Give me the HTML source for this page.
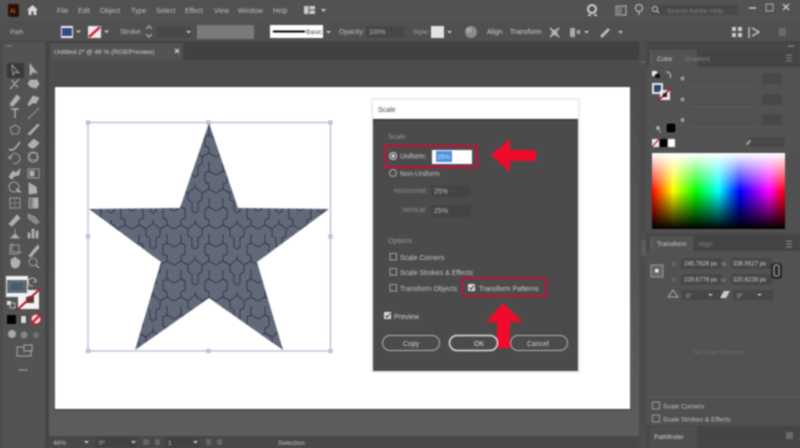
<!DOCTYPE html>
<html><head><meta charset="utf-8"><title>Scale</title>
<style>
html,body{margin:0;padding:0;background:#535353;width:800px;height:448px;overflow:hidden}
#w{position:relative;width:800px;height:448px;overflow:hidden;filter:blur(.7px)}
#w>svg{position:absolute;left:0;top:0}
text{font-family:"Liberation Sans",sans-serif;font-size:7px;fill:#bdbdbd}
#sp{position:absolute;left:652px;top:153px;width:133px;height:76px;background:linear-gradient(180deg,#fff 0,rgba(255,255,255,0) 50%,rgba(0,0,0,0) 50%,#000 100%),linear-gradient(90deg,#f00 0,#ff0 16%,#0f0 33%,#0ff 50%,#00f 66%,#f0f 88%,#f00 100%)}
</style></head><body><div id="w">
<svg width="800" height="448" viewBox="0 0 800 448">
<defs>
<pattern id="fine" width="2.600" height="2.600" patternUnits="userSpaceOnUse" patternTransform="rotate(30)">
<rect width="2.600" height="2.600" fill="#555c6c"/><rect width="2.600" height=".9" fill="#7a808e"/>
</pattern>
<pattern id="hex" width="42" height="36" patternUnits="userSpaceOnUse" x="6" y="4">
<rect width="42" height="36" fill="url(#fine)"/>
<g fill="none" stroke="#252b44" stroke-width=".75">
<path d="M0 9 L7 5 L14 9 L14 16 L18 18 L18 27 L21 29 L24 27 L24 18 L28 16 L28 9 L35 5 L42 9"/>
<path d="M0 27 L7 23 L11 25 L11 34 L7 36 M7 0 L7 5 M35 0 L35 5 M35 23 L42 27 M35 23 L31 25 L31 34 L35 36"/>
<path d="M21 0 L21 3 L14 9 M21 3 L28 9 M7 23 L7 14 M35 23 L35 14"/>
</g>
</pattern>
<linearGradient id="bg" x1="0" y1="0" x2="0" y2="1"><stop offset="0" stop-color="#4c4c4c"/><stop offset="1" stop-color="#5c5c5c"/></linearGradient>
</defs>

<!-- base chrome -->
<rect width="800" height="448" fill="#535353"/>
<rect y="0" width="800" height="21" fill="#525252"/>
<rect y="21" width="800" height="21" fill="#505050"/>
<rect y="41" width="800" height="1" fill="#444"/>
<rect x="48" y="42" width="591" height="18" fill="#414141"/>
<rect x="0" y="42" width="47" height="8" fill="#474747"/>
<rect x="50" y="43" width="133" height="17" fill="#535353"/>
<rect x="0" y="42" width="47" height="406" fill="#535353"/>
<rect x="0" y="42" width="3" height="406" fill="#4b4b4b"/>
<rect x="45" y="42" width="4" height="406" fill="#464646"/>
<rect x="49" y="60" width="590" height="376" fill="url(#bg)"/>
<rect x="49" y="436" width="590" height="12" fill="#484848"/>

<!-- artboard -->
<rect x="55" y="87" width="575" height="322" fill="#fff"/>
<rect x="54" y="86" width="577" height="1" fill="#3e3e3e"/>
<rect x="54" y="409" width="577" height="1" fill="#3a3a3a"/>

<!-- title bar -->
<rect x="8" y="4" width="11" height="13" rx="2" fill="#2a1208"/>
<text x="10" y="13" style="font-size:6px;fill:#e8862a">Ai</text>
<path d="M27 10l5.500-5 5.500 5h-1.500v5h-3v-3.500h-2V15h-3v-5z" fill="#d8d8d8"/>
<g style="font-size:7px">
<text x="57" y="13">File</text><text x="78" y="13">Edit</text><text x="100" y="13">Object</text>
<text x="131" y="13">Type</text><text x="156" y="13">Select</text><text x="185" y="13">Effect</text>
<text x="214" y="13">View</text><text x="238" y="13">Window</text><text x="273" y="13">Help</text>
</g>
<rect x="304" y="6" width="11" height="8" fill="#ccc"/><path d="M309 6v8M309 10h6" stroke="#555" fill="none"/>
<path d="M321 9l2.500 3 2.500-3z" fill="#ccc"/>
<circle cx="592" cy="9" r="4" fill="none" stroke="#ddd" stroke-width="1.800"/><path d="M588 15h3M594 15h3" stroke="#ddd" stroke-width="1.500"/>
<rect x="616" y="6" width="10" height="9" fill="none" stroke="#bbb"/><rect x="616" y="6" width="6" height="9" fill="#777"/>
<circle cx="639" cy="8" r="3.500" fill="none" stroke="#ccc"/><path d="M639 12v3" stroke="#ccc"/>
<rect x="652" y="5" width="86" height="10" rx="1" fill="#484848"/>
<circle cx="655" cy="9" r="2.500" fill="none" stroke="#ccc"/><path d="M657 11l2 2" stroke="#ccc"/>
<text x="667" y="13" style="font-size:6.500px;fill:#7e7e7e">Search Adobe Help</text>
<path d="M749 8h7" stroke="#ccc" stroke-width="1.500"/>
<rect x="766" y="4" width="7" height="7" fill="none" stroke="#aaa"/>
<path d="M783 4l6 6M789 4l-6 6" stroke="#ddd" stroke-width="1.200"/>

<!-- control bar -->
<text x="10" y="34" style="font-size:6.500px">Path</text>
<rect x="61" y="26" width="12" height="12" fill="#eef" /><rect x="62" y="28" width="10" height="8" fill="#2c4e7e"/>
<path d="M76 30.500l2.500 2.500 2.500-2.500z" fill="#ccc"/>
<rect x="88" y="26" width="13" height="12" fill="#f3e6e6"/><path d="M89 37l11-10" stroke="#c8203c" stroke-width="2.500"/>
<path d="M104 30.500l2.500 2.500 2.500-2.500z" fill="#ccc"/>
<text x="120" y="34" style="font-size:7px">Stroke:</text>
<path d="M146 29l3-3 3 3M146 34l3 3 3-3" stroke="#bbb" fill="none"/>
<rect x="157" y="27" width="34" height="11" fill="#484848"/>
<path d="M186 31l2.500 2.500 2.500-2.500z" fill="#ccc"/>
<rect x="197" y="25" width="57" height="14" fill="#7a7a7a"/>
<rect x="270" y="25" width="53" height="13" fill="#fff"/>
<rect x="273" y="30.500" width="32" height="2" fill="#000"/>
<text x="306" y="34" style="font-size:6.500px;fill:#444">Basic</text>
<path d="M326 31l2.500 2.500 2.500-2.500z" fill="#ccc"/>
<text x="339" y="34">Opacity:</text>
<rect x="366" y="26" width="33" height="12" fill="#474747"/>
<text x="369" y="34" style="font-size:6.500px">100%</text>
<rect x="399" y="26" width="5" height="12" fill="#474747"/>
<text x="413" y="34" style="font-size:6.500px;fill:#a0a0a0">Style:</text>
<rect x="431" y="26" width="13" height="12" fill="#e4e4e4"/>
<path d="M447 31l2.500 2.500 2.500-2.500z" fill="#ccc"/>
<circle cx="471" cy="32" r="6" fill="#8b8b8b"/><circle cx="469" cy="30" r="3" fill="#a5a5a5"/>
<text x="487" y="34" style="fill:#d0d0d0">Align</text>
<text x="510" y="34" style="fill:#d0d0d0">Transform</text>
<path d="M550 28l9 9M559 28l-9 9" stroke="#ccc" stroke-width="1.500"/><rect x="552" y="30" width="5" height="5" fill="none" stroke="#aaa"/>
<path d="M570 28h5v9h-5zM577 30h3v4h-3z" fill="#aaa"/>
<path d="M584 31l2.500 2.500 2.500-2.500z" fill="#ccc"/>
<path d="M600 36l8-8 2 2-8 8z" fill="#bbb"/><path d="M618 31l2.500 2.500 2.500-2.500z" fill="#ccc"/>
<g fill="#ccc"><rect x="732" y="27" width="4" height="4"/><rect x="738" y="27" width="4" height="4"/><rect x="732" y="33" width="4" height="4"/><rect x="738" y="33" width="4" height="4"/></g>
<path d="M749 27v11M752 28l7 4-7 4" stroke="#ccc" fill="none" stroke-width="1.300"/>
<rect x="779" y="28" width="7" height="8" fill="#6c6c6c"/>

<!-- tab -->
<text x="54" y="54" style="font-size:6.500px;fill:#cfcfcf">Untitled-2* @ 46 % (RGB/Preview)</text>
<path d="M175 49l4 4M179 49l-4 4" stroke="#ddd" stroke-width="1.200"/>
<path d="M6 46h6" stroke="#888"/>

<!-- tool bar -->
<rect x="7" y="63" width="17" height="15" fill="#3a3a3a"/>
<g fill="#b0b0b0" stroke="#b0b0b0" stroke-width=".8">
<path d="M12 65l1 10 2-3 4 1z" fill="none"/><path d="M30 64l0 11 3-3 4 1z"/>
<path d="M10 89l9-10M12 80l2 3M18 87l-3-2" fill="none" stroke-width="1.200"/><path d="M30 80h7l2 4-3 4-5-1-3-3z"/>
<path d="M10 104l7-9 3 3-7 8zM11 105l-1 2"/><path d="M28 104l5-8 6 2-3 5-4 0-3 3z"/>
<path d="M11 109h8M15 109v9" fill="none" stroke-width="1.400"/><path d="M28 119l11-11" fill="none"/>
<path d="M15 125l5 3-2 6h-6l-2-6z" fill="none"/><path d="M28 134l10-10 1 1-9 10z"/>
<path d="M9 149c3 3 6 0 11-7" fill="none" stroke-width="1.600"/><path d="M28 145l6-6 5 4-5 5h-3z"/>
<path d="M10 158a5 5 0 1 1 3 5M8 156l2 3 2-3" fill="none"/><circle cx="33" cy="157" r="5" fill="none"/><rect x="30" y="153" width="7" height="7" fill="none"/>
<path d="M9 177l4-6 3 2 4-4-1 6-5 1-2 3z"/><rect x="28" y="169" width="11" height="9" fill="none"/><rect x="30" y="171" width="4" height="5"/>
<circle cx="14" cy="187" r="5" fill="none"/><path d="M16 188l5 4-3 0z"/><path d="M29 183l7 4 1 6-8 1z"/>
<rect x="10" y="198" width="10" height="10" fill="none"/><path d="M15 198v10M10 203h10" stroke="#888"/><rect x="29" y="198" width="4" height="10" fill="#777"/><rect x="34" y="198" width="4" height="10"/>
<path d="M9 224l8-9 3 3-8 8z"/><path d="M28 214l7 3 4 5-3 2-8-6z" stroke="#999" fill="#888"/>
<path d="M15 229v8M11 238l4-4 4 4M10 238h10"/><path d="M28 238v-5h2v5zM32 238v-9h2v9zM36 238v-7h2v7z"/>
<path d="M10 245h9v9h-9zM12 243v9h10" fill="none"/><path d="M29 256l6-8 3-3 1 3-3 3-5 6z"/>
<path d="M11 262c0-5 2-2 3-4s2 0 3 1 3 0 3 3-2 6-5 6-4-2-4-6z"/><circle cx="33" cy="262" r="4" fill="none"/><path d="M36 265l3 3" fill="none" stroke-width="1.300"/>
</g>
<path d="M36 281a4 4 0 1 0-3 5M36 279v3h-3" fill="none" stroke="#bbb"/>
<!-- fill/stroke -->
<rect x="18" y="290" width="21" height="19" fill="#f6f0f0"/>
<rect x="26" y="296" width="8" height="7" fill="#5a3a3a"/>
<path d="M17 310l23-21" stroke="#a81c30" stroke-width="2"/>
<rect x="6" y="276" width="22" height="21" fill="#f2f2f2"/>
<rect x="7" y="280" width="20" height="13" fill="#5c6a78"/>
<rect x="11" y="283" width="12" height="7" fill="#4b5a68"/>
<rect x="7" y="301" width="4" height="4" fill="#eee"/><rect x="10" y="303" width="5" height="5" fill="none" stroke="#bbb"/>
<rect x="7" y="315" width="9" height="9" fill="#000"/>
<rect x="19" y="315" width="9" height="9" fill="#444"/><rect x="21" y="316" width="5" height="7" fill="#ddd"/>
<circle cx="36" cy="319" r="5" fill="#e8e8e8"/><path d="M32 323l8-8" stroke="#d01c30" stroke-width="2.500"/><circle cx="36" cy="319" r="5" fill="none" stroke="#c02030" stroke-width="1.300"/>
<circle cx="12" cy="334" r="4" fill="#aaa"/><circle cx="24" cy="335" r="3.500" fill="#858585"/><circle cx="36" cy="335" r="3" fill="#737373"/>
<rect x="17" y="347" width="14" height="9" fill="none" stroke="#aaa"/><rect x="24" y="345" width="8" height="6" fill="#535353" stroke="#aaa"/>
<path d="M19 370h9" stroke="#aaa" stroke-dasharray="2 1" stroke-width="1.500"/>

<!-- star -->
<g stroke="#a9a9cf" stroke-width="1" fill="none">
<rect x="88" y="122.500" width="242.500" height="228.500"/>
</g>
<g fill="#ddd" stroke="#a9a9cf">
<rect x="86.500" y="121" width="3" height="3"/><rect x="207" y="121" width="3" height="3"/><rect x="329" y="121" width="3" height="3"/>
<rect x="86.500" y="235" width="3" height="3"/><rect x="329" y="235" width="3" height="3"/>
<rect x="86.500" y="349.500" width="3" height="3"/><rect x="207" y="349.500" width="3" height="3"/><rect x="329" y="349.500" width="3" height="3"/>
</g>
<path d="M209 123L238 208L329 209L257 262L283 350L209 298L135 350L161 262L89 209L180 208Z" fill="url(#hex)"/>

<!-- dialog -->
<rect x="371" y="98" width="209" height="275" fill="#c8c8c8" opacity=".3"/>
<rect x="373" y="100" width="205" height="271" fill="#4b4b4b"/>
<rect x="373" y="100" width="205" height="20" fill="#fff"/>
<rect x="373" y="119" width="205" height="1.500" fill="#2f2f2f"/>
<text x="378" y="112" style="fill:#444;font-size:7px">Scale</text>
<text x="388" y="139" style="fill:#989898">Scale</text>
<rect x="385" y="146" width="92" height="21" fill="none" stroke="#b5183a" stroke-width="2.400"/>
<circle cx="393" cy="156" r="3.500" fill="#4d4d4d" stroke="#d8d8d8"/><circle cx="393" cy="156" r="1.700" fill="#ddd"/>
<text x="400" y="158.500" style="fill:#d0d0d0">Uniform:</text>
<rect x="432" y="150" width="40" height="14" fill="#fff"/>
<rect x="436" y="151" width="16" height="11" fill="#4a90dc"/>
<text x="437" y="159" style="font-size:6.500px;fill:#d9ecff">25%</text>
<circle cx="393" cy="173" r="3.500" fill="#4d4d4d" stroke="#aaa"/>
<text x="400" y="176" style="fill:#c4c4c4">Non-Uniform</text>
<text x="394" y="193" style="fill:#8e8e8e">Horizontal:</text>
<rect x="431" y="185" width="40" height="12" fill="#444"/>
<text x="434" y="193.500" style="fill:#bbb">25%</text>
<text x="402" y="212" style="fill:#8e8e8e">Vertical:</text>
<rect x="431" y="205" width="40" height="12" fill="#444"/>
<text x="434" y="213" style="fill:#bbb">25%</text>
<!-- red arrow left -->
<path d="M491 155L510 139L510 150L536 150L536 161L510 161L510 172Z" fill="#f00a2c"/>
<text x="388" y="243" style="fill:#989898">Options</text>
<g fill="none" stroke="#a0a0a0"><rect x="390" y="253.500" width="6.500" height="6.500"/><rect x="390" y="268.500" width="6.500" height="6.500"/><rect x="390" y="284.500" width="6.500" height="6.500"/></g>
<text x="400" y="260" style="fill:#c4c4c4">Scale Corners</text>
<text x="400" y="275" style="fill:#c4c4c4">Scale Strokes &amp; Effects</text>
<text x="400" y="291" style="fill:#c4c4c4">Transform Objects</text>
<rect x="463" y="278" width="83" height="18" fill="none" stroke="#b5183a" stroke-width="2.200"/>
<rect x="468" y="284" width="7" height="7" fill="#ddd"/><path d="M469.500 287.500l1.500 2 3-4" stroke="#444" fill="none" stroke-width="1.100"/>
<text x="479" y="291" style="fill:#d0d0d0">Transform Patterns</text>
<path d="M503 303L523 322L510 322L510 348L497 348L497 322L486 322Z" fill="#f00a2c"/>
<rect x="384" y="312" width="7" height="7" fill="#ddd"/><path d="M385.500 315.500l1.500 2 3-4" stroke="#444" fill="none" stroke-width="1.100"/>
<text x="394" y="319" style="fill:#d0d0d0">Preview</text>
<g fill="none">
<rect x="382.500" y="335.500" width="57" height="15" rx="7.500" stroke="#b5b5b5"/>
<rect x="449.500" y="335.500" width="48" height="15" rx="7.500" stroke="#e0e0e0" stroke-width="1.500"/>
<rect x="510.500" y="335.500" width="57" height="15" rx="7.500" stroke="#b5b5b5"/>
</g>
<text x="403" y="346" style="fill:#d0d0d0">Copy</text>
<text x="474" y="346" style="fill:#e4e4e4">OK</text>
<text x="527" y="346" style="fill:#d0d0d0">Cancel</text>

<!-- right dock -->
<rect x="639" y="42" width="8" height="406" fill="#4c4c4c"/>
<rect x="647" y="42" width="153" height="406" fill="#505050"/>
<rect x="647" y="42" width="153" height="8" fill="#474747"/>
<path d="M788 46h6" stroke="#999"/>
<rect x="647" y="50" width="153" height="17" fill="#444"/>
<rect x="649" y="50" width="48" height="17" fill="#535353"/>
<text x="657" y="61" style="fill:#d0d0d0;font-size:6.500px">Color</text>
<text x="685" y="61" style="fill:#808080;font-size:6.500px">Gradient</text>
<path d="M652 55v7" stroke="#777" stroke-dasharray="1 1"/>
<path d="M786 55h6M786 58h6M786 61h6" stroke="#888"/>
<rect x="647" y="67" width="153" height="86" fill="#525252"/>
<rect x="652" y="71" width="5" height="5" fill="#eee"/><rect x="655" y="74" width="5" height="4" fill="#111"/>
<path d="M666 72a4 4 0 0 1 4 6" fill="none" stroke="#bbb" stroke-width="1.200"/>
<rect x="652" y="83" width="11" height="11" fill="#e8e8f0"/><rect x="654" y="85" width="7" height="7" fill="#2c4866"/>
<rect x="660" y="90" width="10" height="10" fill="#f2e6e6"/><path d="M659 100l12-12" stroke="#b81c30" stroke-width="1.800"/><rect x="663" y="93" width="4" height="4" fill="#222"/>
<g fill="#9a9a9a"><circle cx="682.500" cy="78.500" r="2"/><circle cx="682.500" cy="99.500" r="2"/><circle cx="682.500" cy="120" r="2"/></g>
<g fill="#484848"><rect x="762" y="73" width="20" height="11"/><rect x="762" y="94" width="20" height="11"/><rect x="762" y="114" width="20" height="11"/><rect x="750" y="137" width="35" height="10"/></g>
<path d="M688 86h70M688 107h70M688 127h70" stroke="#5a5a5a"/>
<path d="M746 144l4-4 1 1-4 4z" fill="#bbb"/>
<circle cx="658" cy="128" r="2" fill="#aaa"/><path d="M659 130l2 3" stroke="#aaa"/>
<rect x="666" y="123" width="10" height="10" rx="2" fill="#000" stroke="#666"/>
<rect x="652" y="139" width="7" height="8" fill="#eee"/><path d="M652 147l7-8" stroke="#b81c30" stroke-width="1.300"/>
<rect x="660" y="139" width="7" height="8" fill="#000"/><rect x="668" y="139" width="7" height="8" fill="#fff"/>
<!-- transform tabs -->
<rect x="647" y="233" width="153" height="2" fill="#494949"/>
<rect x="647" y="235" width="153" height="16" fill="#444"/>
<rect x="649" y="236" width="44" height="15" fill="#535353"/>
<text x="657" y="246" style="fill:#d0d0d0;font-size:6.500px">Transform</text>
<text x="698" y="246" style="fill:#808080;font-size:6.500px">Align</text>
<path d="M652 240v7" stroke="#777" stroke-dasharray="1 1"/>
<path d="M786 241h6M786 244h6M786 247h6" stroke="#888"/>
<rect x="647" y="251" width="153" height="145" fill="#525252"/>
<rect x="651" y="265" width="12" height="12" fill="#666" stroke="#999"/><rect x="655" y="269" width="3.500" height="3.500" fill="#eee"/>
<rect x="681" y="258" width="41" height="11" rx="2" fill="#474747"/><text x="684" y="265.500" style="font-size:6px;fill:#ccc">245.7926 px</text>
<rect x="731" y="258" width="41" height="11" rx="2" fill="#474747"/><text x="733" y="265.500" style="font-size:6px;fill:#ccc">336.9527 px</text>
<rect x="681" y="274" width="41" height="11" rx="2" fill="#474747"/><text x="684" y="281.500" style="font-size:6px;fill:#ccc">229.6776 px</text>
<rect x="731" y="274" width="41" height="11" rx="2" fill="#474747"/><text x="733" y="281.500" style="font-size:6px;fill:#ccc">320.6228 px</text>
<text x="672" y="266" style="font-size:5.500px;fill:#999">X:</text><text x="672" y="282" style="font-size:5.500px;fill:#999">Y:</text><text x="721" y="266" style="font-size:5.500px;fill:#999">W:</text><text x="721" y="282" style="font-size:5.500px;fill:#999">H:</text>
<rect x="771" y="263" width="11" height="16" rx="3" fill="#2a2a2a"/><rect x="774" y="265" width="5" height="11" rx="2" fill="none" stroke="#bbb"/>
<path d="M668 297l5-7 5 7z" fill="none" stroke="#aaa"/>
<rect x="682" y="290" width="40" height="10" fill="#474747"/><text x="686" y="298" style="font-size:6px;fill:#bbb">0°</text><path d="M708 294l2.500 2 2.500-2z" fill="#ccc"/>
<path d="M720 298l4-7h6l-4 7z" fill="#ccc"/>
<rect x="733" y="290" width="40" height="10" fill="#474747"/><text x="737" y="298" style="font-size:6px;fill:#bbb">0°</text><path d="M757 294l2.500 2 2.500-2z" fill="#ccc"/>
<path d="M647 305h153" stroke="#585858"/>
<text x="694" y="354" style="font-size:5.500px;fill:#6e6e6e">No Shape Properties</text>
<path d="M647 397h153" stroke="#5c5c5c"/>
<g fill="none" stroke="#999"><rect x="652.500" y="402" width="7" height="7"/><rect x="652.500" y="415" width="7" height="7"/></g>
<text x="663" y="408.500" style="font-size:6.500px;fill:#c0c0c0">Scale Corners</text>
<text x="663" y="421.500" style="font-size:6.500px;fill:#c0c0c0">Scale Strokes &amp; Effects</text>
<rect x="647" y="426" width="153" height="22" fill="#454545"/>
<rect x="649" y="427" width="48" height="21" fill="#4e4e4e"/>
<text x="654" y="439" style="fill:#d0d0d0;font-size:6.500px">Pathfinder</text>
<rect x="786" y="432" width="7" height="7" fill="#6a6a6a"/>
<path d="M641 240h5v16h-5z" fill="#5c5c5c"/>
<path d="M641 62h4" stroke="#777"/>

<!-- status bar -->
<text x="53" y="445" style="font-size:6.500px;fill:#c0c0c0">46%</text>
<path d="M84 441l2.500 2.500 2.500-2.500z" fill="#ccc"/>
<rect x="96" y="437" width="40" height="11" fill="#414141"/>
<text x="99" y="445" style="font-size:6.500px;fill:#c0c0c0">0°</text>
<path d="M131 441l2.500 2.500 2.500-2.500z" fill="#ccc"/>
<rect x="143" y="439" width="6" height="6" fill="#666"/><rect x="155" y="439" width="5" height="6" fill="#666"/>
<rect x="165" y="437" width="34" height="11" fill="#414141"/>
<text x="168" y="445" style="font-size:6.500px;fill:#c0c0c0">1</text>
<path d="M193 441l2.500 2.500 2.500-2.500z" fill="#ccc"/>
<rect x="206" y="439" width="5" height="6" fill="#666"/><rect x="217" y="439" width="5" height="6" fill="#666"/>
<text x="278" y="445" style="font-size:6.500px;fill:#c0c0c0">Selection</text>
</svg>
<div id="sp"></div>
</div></body></html>
